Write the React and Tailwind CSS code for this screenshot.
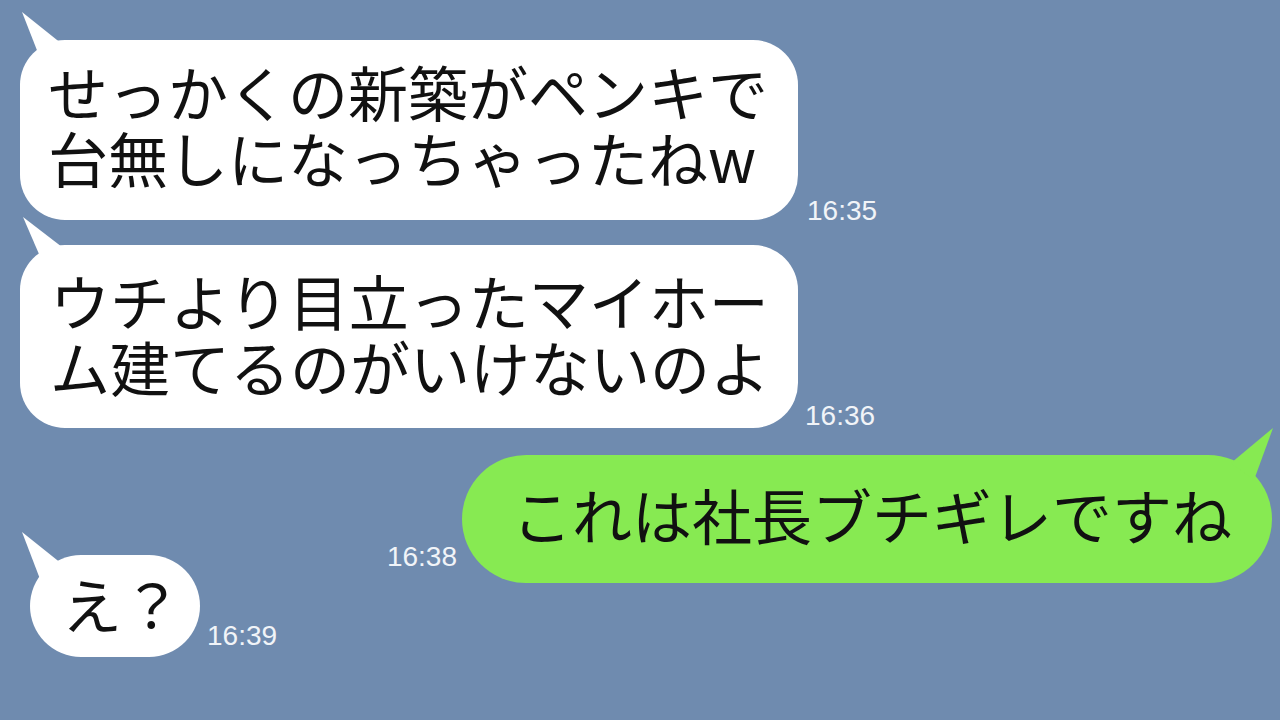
import React from "react";

// tail drawn over the bubble corner, points in svg coords
function Tail({ className, points, fill }) {
  return (
    <svg className={`absolute overflow-visible ${className}`} width="60" height="60" viewBox="0 0 60 60">
      <polygon points={points} fill={fill} />
    </svg>
  );
}

function Time({ children, className }) {
  return (
    <span className={`text-[28px] leading-[20px] text-[#f1f4f8] font-['Liberation_Sans',sans-serif] ${className}`}>
      {children}
    </span>
  );
}

export default function App() {
  return (
    <div className="w-[1280px] h-[720px] overflow-hidden bg-[#6f8baf] flex flex-col pt-[40px] font-['Noto_Sans_CJK_JP',sans-serif] text-[#111]">
      {/* 1 */}
      <div className="flex items-end pl-[20px]">
        <div className="relative bg-white rounded-[45px] pl-[28px] pr-[30px] pt-[18px] pb-[30px] text-[60px] leading-[66px] whitespace-nowrap">
          <Tail className="left-0 top-[-30px]" points="2,2 42,34 20,48" fill="#ffffff" />
          <p className="relative">
            せっかくの新築がペンキで
            <br />
            台無しになっちゃったねw
          </p>
        </div>
        <Time className="ml-[9px] mb-[-1px]">16:35</Time>
      </div>

      {/* 2 */}
      <div className="flex items-end pl-[20px] mt-[25px]">
        <div className="relative bg-white rounded-[45px] pl-[30px] pr-[28px] pt-[22px] pb-[29px] text-[60px] leading-[66px] whitespace-nowrap">
          <Tail className="left-0 top-[-30px]" points="3,2 42,32 22,46" fill="#ffffff" />
          <p className="relative">
            ウチより目立ったマイホー
            <br />
            ム建てるのがいけないのよ
          </p>
        </div>
        <Time className="ml-[7px] mb-[2px]">16:36</Time>
      </div>

      {/* 3 */}
      <div className="flex items-end justify-end pr-[8px] mt-[27px]">
        <Time className="mr-[5px] mb-[16px]">16:38</Time>
        <div className="relative bg-[#87ea52] rounded-[64px] pl-[50px] pr-[40px] pt-[26px] pb-[36px] text-[60px] leading-[66px] whitespace-nowrap">
          <Tail className="right-[-10px] top-[-30px]" points="51,3 9,38 32,55" fill="#87ea52" />
          <p className="relative">これは社長ブチギレですね</p>
        </div>
      </div>

      {/* 4 */}
      <div className="flex items-end pl-[30px] mt-[-28px]">
        <div className="relative bg-white rounded-[51px] pl-[32px] pr-[18px] pt-[15px] pb-[21px] text-[60px] leading-[66px] whitespace-nowrap">
          <Tail className="left-[-10px] top-[-30px]" points="2,7 20,54 42,39" fill="#ffffff" />
          <p className="relative">え？</p>
        </div>
        <Time className="ml-[7px] mb-[11px]">16:39</Time>
      </div>
    </div>
  );
}
